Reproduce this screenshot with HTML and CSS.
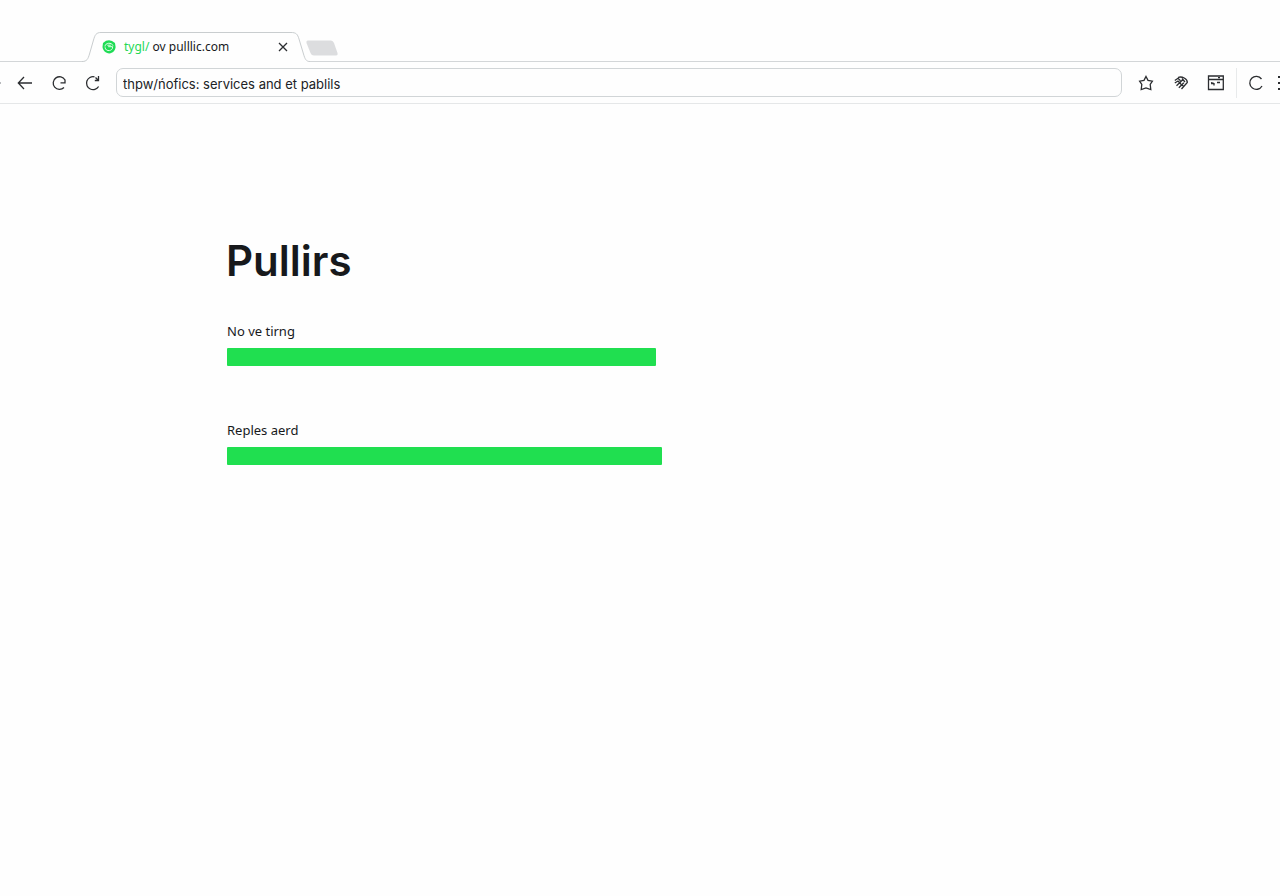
FILE: index.html
```
<!DOCTYPE html>
<html lang="en">
<head>
<meta charset="utf-8">
<meta name="viewport" content="width=device-width, initial-scale=1">
<title>Pullirs</title>
<link rel="stylesheet" href="styles.css">
</head>
<body>
<header>
  <div class="tab-strip">
    <div class="tab">
      <svg class="tab-shape" viewBox="0 0 228 30" aria-hidden="true"><path d="M0 29.5C5 29.5 6 27 7.500 22L11.500 8C13 3 14 .5 19 .5H209C214 .5 215.500 2 217 7L221.500 22C223 27 224 29.500 228 29.500V30H0Z" fill="#fefefe"/><path d="M0 29.5C5 29.5 6 27 7.500 22L11.500 8C13 3 14 .5 19 .5H209C214 .5 215.500 2 217 7L221.500 22C223 27 224 29.500 228 29.500" fill="none" stroke="#c9cdcf"/></svg>
      <svg class="favicon" viewBox="0 0 14 14" aria-hidden="true"><path d="M7 .3 10 1l3 2 .6 4c-.2 3.500-3 6-6.300 6.500C3.500 13 1 10.500.5 7L1 3l3-2.200Z" fill="#1fdc55"/><path d="M3 6.500C3 2.500 10 2.200 11 5.700M3.100 7.300c.2 4.800 7.900 4.200 7.600-.6H6.200M5.300 5.200h3.500" fill="none" stroke="#e4ffe9" stroke-width="1"/></svg>
      <span class="tab-title"><span class="tab-scheme">tygl/</span> ov pulllic.com</span>
      <button class="tab-close" aria-label="Close tab"><svg width="10" height="10" viewBox="0 0 10 10"><path d="m1 1 8 8m0-8-8 8"/></svg></button>
    </div>
    <button class="new-tab" aria-label="New tab"><svg width="34" height="16" viewBox="0 0 34 16"><path d="M3 .5H26Q28 .5 29 3L32.500 13Q33 15.500 31 15.500H9Q6.500 15.500 5.500 13L1.500 3Q1 .5 3 .5Z" fill="#dcdddf"/></svg></button>
  </div>
  <nav class="toolbar" aria-label="Browser controls">
    <span class="edge-mark"></span>
    <button aria-label="Back"><svg viewBox="0 0 18 18"><path d="M16 9H2.500M8 3 2.300 9 8 15"/></svg></button>
    <button aria-label="Forward"><svg viewBox="0 0 18 18"><path d="M15 6A6.300 6.300 0 1 0 14 13.500M15 5.500V8.800H10.500"/></svg></button>
    <button aria-label="Reload"><svg viewBox="0 0 18 18"><path d="M10.500 2.800A6.500 6.500 0 1 0 14.600 12.500M10.800 6.500H14.500V2M11.500 3.500 14 6"/></svg></button>
    <input class="address" type="text" aria-label="Address" value="thpw/ńofics: services and et pablils">
    <div class="actions">
      <button aria-label="Bookmark"><svg viewBox="0 0 18 18"><path d="m9 2.500 2 3.800 4.400.9-2.200 3.300.6 5L9 14l-4.800 1.500.6-5L2.600 7.200 7 6.300Z"/></svg></button>
      <button aria-label="Extensions"><svg viewBox="0 0 18 18"><path d="M6 3.500C10 1.800 15.500 5 15.300 8.500L9.500 15M2.800 6.500 6 4.300l2.500 2.500M2.800 9 6 7l3 3M4.500 11.800 11 5.500M6.800 13.800l5-5M8.500 10.500 11.500 12M10 4.500l3 3.500"/></svg></button>
      <button aria-label="Reader"><svg viewBox="0 0 18 18"><path d="M1.500 2H16.300V15.500H1.500ZM2 5.500H16M4 8.500 7 9.500V11.500M4 9.500h3M10 8.500H13M11 3.700H13"/></svg></button>
      <span class="divider"></span>
      <button aria-label="Sync"><svg viewBox="0 0 18 18"><path d="M14.500 5A6.500 6.500 0 1 0 15 12"/></svg></button>
      <button class="more" aria-label="More"><svg viewBox="0 0 4 18"><path d="M1 3h2M1 9h2M1 15h2" stroke-width="2"/></svg></button>
    </div>
  </nav>
</header>
<main>
  <h1>Pullirs</h1>
  <section class="metric">
    <h2>No ve tirng</h2>
    <div class="bar" style="width:98.6%"></div>
  </section>
  <section class="metric">
    <h2>Reples aerd</h2>
    <div class="bar" style="width:100%"></div>
  </section>
</main>
</body>
</html>
```
FILE: styles.css
```
* { box-sizing: border-box; }
body {
  margin: 0;
  background: #fefefe;
  color: #17191c;
  font-family: "Noto Sans", sans-serif;
}
button {
  display: flex;
  padding: 0;
  border: 0;
  background: none;
  color: #2b2d30;
}
svg { fill: none; stroke: currentColor; stroke-width: 1.3; }
.tab-strip {
  display: flex;
  align-items: flex-end;
  padding: 32px 0 0 82px;
  border-bottom: 1px solid #d3d6d8;
}
.tab {
  position: relative;
  display: flex;
  align-items: center;
  width: 228px;
  height: 30px;
  margin-bottom: -1px;
  padding: 0 22px 0 20px;
}
.tab-shape {
  position: absolute;
  inset: 0;
  stroke: none;
  stroke-width: 1;
}
.favicon {
  position: relative;
  width: 14px;
  height: 14px;
  stroke: none;
}
.tab-title {
  position: relative;
  flex: 1;
  margin-left: 8px;
  font-size: 12px;
  line-height: 16px;
  white-space: nowrap;
}
.tab-scheme { color: #25d855; }
.tab-close { position: relative; }
.new-tab { margin: 0 0 5px -5px; }
.new-tab svg { stroke: none; }
.toolbar {
  display: flex;
  align-items: center;
  height: 42px;
  border-bottom: 1px solid #e5e7e8;
}
.toolbar svg { width: 18px; height: 18px; }
.toolbar > button { margin-right: 16px; }
.edge-mark {
  width: 1px;
  height: 2px;
  margin-right: 15px;
  background: #b8babd;
}
.toolbar > .address {
  flex: 1;
  min-width: 0;
  height: 29px;
  margin: 0 15px 0 -2px;
  padding: 2px 6px 0;
  border: 1px solid #d1d5d7;
  border-radius: 7px;
  background: #fefefe;
  color: #202225;
  font: 13px/18px Inter, sans-serif;
}
.actions { display: flex; align-items: center; gap: 17px; }
.divider { width: 1px; height: 30px; margin: 0 -7px 0 -6px; background: #e8eaeb; }
.actions .more { margin: 0 -1px 0 -5px; }
.actions .more svg { width: 4px; }
main { max-width: 662px; padding: 133px 0 48px 227px; }
h1 {
  margin: 0 0 35px -1px;
  font: 600 42px/48px Inter, sans-serif;
}
.metric { margin-bottom: 53px; }
h2 { margin: 0 0 6px; font-size: 13px; font-weight: 400; line-height: 22px; }
.bar { height: 18px; border-radius: 1px; background: #20df50; }
```
